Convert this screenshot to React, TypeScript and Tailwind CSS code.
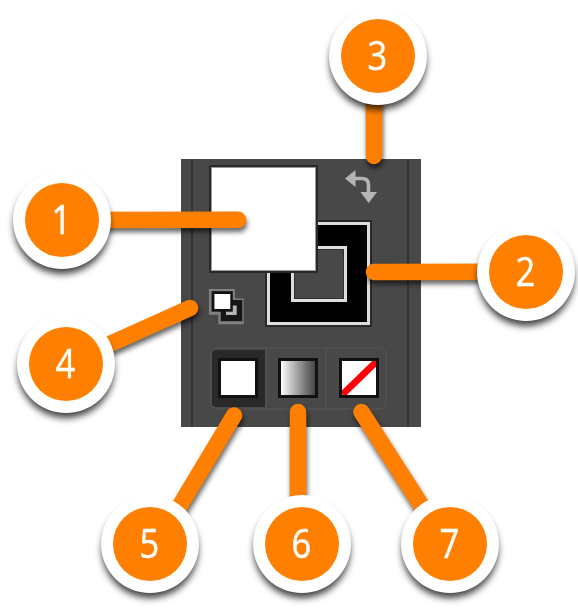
const markers = [
  { n: 1, x: 62, y: 220, tx: 238, ty: 219.8 },
  { n: 2, x: 526, y: 271.8, tx: 374, ty: 272 },
  { n: 3, x: 378, y: 56, tx: 374, ty: 156, sx: 374 },
  { n: 4, x: 66, y: 363.8, tx: 190, ty: 308 },
  { n: 5, x: 150, y: 543.8, tx: 234, ty: 415.5, sx: 157 },
  { n: 6, x: 302, y: 543.8, tx: 298, ty: 412, sx: 298 },
  { n: 7, x: 450, y: 543.8, tx: 361.5, ty: 412, sx: 446 },
];

function SwapIcon() {
  return (
    <svg className="absolute left-[163px] top-[10px] h-9 w-9" viewBox="0 0 36 36">
      <path d="M11 9.5h7Q24.500 9.500 24.500 16v9" fill="none" stroke="#b5b5b5" strokeWidth="3.600" />
      <path d="M1 9.500 11.500 1v17zM16.500 23H33L24.700 34z" fill="#b5b5b5" />
    </svg>
  );
}

function DefaultIcon() {
  return (
    <svg className="absolute left-[27px] top-[129px] h-[38px] w-[38px]" viewBox="0 0 38 38">
      <path d="M.9.9h26v9.500h8.700v25.800H10.300v-9.500H.9z" fill="#808080" />
      <path d="M12.700 12h21.600v21.200H12.700z" fill="#161616" />
      <path d="M18 17.500h10.700v9.500H18z" fill="#b5b5b5" />
      <path d="M3.600 3.200h21.200v20.500H3.600z" fill="#111" />
      <path d="M6.400 6h15.900v15H6.400z" fill="#fff" />
    </svg>
  );
}

function NoneIcon() {
  return (
    <svg className="h-full w-full" viewBox="0 0 35 35">
      <path d="M3 32 33 3" stroke="#ff0008" strokeWidth="7" strokeLinecap="square" />
    </svg>
  );
}

function ToolPanel() {
  return (
    <section className="flex h-[268px] w-[240px] bg-[#484848]">
      <div className="w-[12px] border-r-2 border-[#333]" />
      <div className="w-[214px]">
        <div className="relative -ml-3 h-[188px] w-[226px]">
          <div className="absolute left-[84px] top-[61px] h-[107px] w-[107px] border-2 border-[#292929] bg-[#dedede] p-[3px]">
            <div className="h-full w-full bg-black p-[20.500px]">
              <div className="h-full w-full border-[3px] border-[#dedede] bg-[#484848]">
                <div className="h-full w-full border border-[#303030]" />
              </div>
            </div>
          </div>
          <div className="absolute left-[28px] top-[6px] h-[108px] w-[109px] border-2 border-[#292929] bg-[#999]">
            <div className="m-px h-[102px] w-[103px] bg-white" />
          </div>
          <SwapIcon />
          <DefaultIcon />
        </div>
        <div className="ml-[17px] grid h-[63px] w-[177px] grid-cols-[53px_62px_1fr] rounded-lg border-2 border-[#4f4f4f]">
          <div className="my-px flex rounded-l bg-[#292929] pl-[6px] pt-[8px]">
            <div className="h-10 w-10 border-[3px] border-[#111] bg-white" />
          </div>
          <div className="border-x-2 border-[#4f4f4f] pl-[11px] pt-[9px]">
            <div className="h-10 w-10 border-[3px] border-[#111] bg-linear-to-r from-white to-[#484848]" />
          </div>
          <div className="pl-[12px] pt-[9px]">
            <div className="h-10 w-10 overflow-hidden border-[3px] border-[#111] bg-white">
              <NoneIcon />
            </div>
          </div>
        </div>
      </div>
      <div className="w-[2px] bg-[#333]" />
    </section>
  );
}

export default function App() {
  return (
    <main className="relative h-[612px] w-[578px] overflow-hidden bg-white pl-[181px] pt-[159px]">
      <ToolPanel />
      <svg className="absolute inset-0 h-full w-full drop-shadow-[1px_4px_2.500px_rgba(0,0,0,0.6)]" viewBox="0 0 578 612">
        {markers.map((m) => (
          <line key={m.n} x1={m.sx ?? m.x} y1={m.y} x2={m.tx} y2={m.ty} stroke="#ff8000" strokeWidth="16.500" strokeLinecap="round" />
        ))}
      </svg>
      {markers.map((m) => (
        <div
          key={m.n}
          style={{ left: m.x - 49, top: m.y - 49 }}
          className="absolute flex h-[98px] w-[98px] items-center justify-center rounded-full bg-white shadow-[0_6px_7px_-1px_rgba(0,0,0,0.75)]"
        >
          <div className="flex h-[74px] w-[74px] items-center justify-center rounded-full bg-[#ff8000] pb-[2px] pr-[2px]">
            <span className="scale-x-[0.86] font-['Open_Sans',sans-serif] text-[40px] leading-none text-white [-webkit-text-stroke:0.5px_white]">{m.n}</span>
          </div>
        </div>
      ))}
    </main>
  );
}
